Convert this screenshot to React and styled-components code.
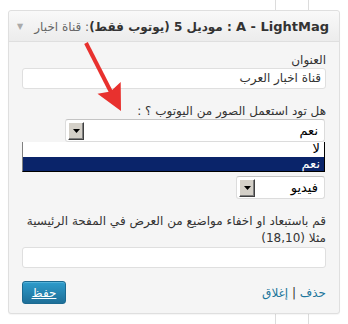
import styled, { createGlobalStyle } from "styled-components";

const GlobalStyle = createGlobalStyle`
  html, body { margin: 0; padding: 0; }
  body { background: #fff; font-family: "DejaVu Sans", sans-serif; }
  * { box-sizing: border-box; }
`;

const Page = styled.div`
  position: relative;
  width: 348px;
  height: 324px;
  padding: 10px 8px 0 8px;
  background-image: linear-gradient(
    to right,
    transparent 275px,
    #dcdcdc 275px,
    #dcdcdc 276px,
    transparent 276px,
    transparent 308px,
    #dcdcdc 308px,
    #dcdcdc 309px,
    transparent 309px
  );
`;

const Widget = styled.div`
  width: 332px;
  direction: rtl;
  background: #f5f5f5;
  border: 1px solid #dfdfdf;
  border-radius: 3px;
  box-shadow: 0 1px 1px rgba(0, 0, 0, 0.04);
`;

const Header = styled.div`
  display: flex;
  align-items: center;
  height: 31px;
  padding: 0 10px 0 8px;
  background: linear-gradient(to bottom, #f9f9f9, #ececec);
  border-bottom: 1px solid #dfdfdf;
  border-radius: 3px 3px 0 0;
`;

const Title = styled.h4`
  flex: 1;
  min-width: 0;
  margin: 0;
  font-size: 12px;
  font-weight: bold;
  color: #333;
  white-space: nowrap;
  overflow: hidden;
`;

const Latin = styled.span`
  font-size: 13px;
`;

const TitleNote = styled.span`
  font-weight: normal;
  color: #666;
`;

const Toggle = styled.span`
  flex-shrink: 0;
  margin-right: 8px;
  font-size: 8px;
  color: #aaa;
`;

const Body = styled.div`
  padding: 10px 13px 9px 13px;
`;

const Field = styled.div`
  position: relative;
  margin-top: ${(p) => p.$top || 0}px;
`;

const Label = styled.label`
  display: block;
  font-size: 12px;
  line-height: ${(p) => p.$lh || 16}px;
  color: #333;
`;

const Input = styled.div`
  height: 21px;
  padding: 0 4px;
  font-size: 12px;
  line-height: 19px;
  color: #333;
  background: #fff;
  border: 1px solid #dfdfdf;
  border-radius: 3px;
`;

const SelectBox = styled.div`
  display: flex;
  align-items: center;
  justify-content: space-between;
  width: ${(p) => p.$width}px;
  height: 23px;
  margin-right: 1px;
  padding: 0 6px 0 2px;
  background: #fff;
  border: 1px solid #dcdcdc;
  border-top-color: #c4c4c4;
  border-radius: 3px;
  font-size: 13px;
  color: #000;
`;

const DropButton = styled.span`
  display: flex;
  align-items: center;
  justify-content: center;
  width: 16px;
  height: 18px;
  background: #d4d0c8;
  border: 1px solid;
  border-color: #fff #404040 #404040 #fff;
  box-shadow: inset -1px -1px 0 #808080;
`;

const DropList = styled.ul`
  position: absolute;
  top: 100%;
  left: 0;
  right: 1px;
  margin: 0;
  padding: 0;
  list-style: none;
  background: #fff;
  border: 1px solid #000;
  border-top: none;
  border-left-color: #808080;
  z-index: 2;
`;

const Option = styled.li`
  height: 14.5px;
  padding: 0 4px;
  font-size: 13px;
  line-height: 14.5px;
  color: ${(p) => (p.$active ? "#fff" : "#000")};
  background: ${(p) => (p.$active ? "#0a246a" : "#fff")};
`;

const Footer = styled.div`
  display: flex;
  align-items: center;
  justify-content: space-between;
  margin-top: 13px;
`;

const Links = styled.div`
  font-size: 12px;
  color: #333;
`;

const Link = styled.a`
  color: #21759b;
  text-decoration: none;
`;

const SaveButton = styled.button`
  width: 44px;
  height: 23px;
  padding: 0;
  font-family: inherit;
  font-size: 12px;
  color: #fff;
  text-decoration: underline;
  background: linear-gradient(to bottom, #2e9ccc, #1e6f98);
  border: 1px solid #1b6a91;
  border-radius: 3px;
  box-shadow: inset 0 1px 0 rgba(120, 200, 230, 0.5);
`;

const Arrow = styled.svg`
  position: absolute;
  left: 0;
  top: 0;
  pointer-events: none;
`;

function Caret() {
  return (
    <svg width="7" height="4" viewBox="0 0 7 4">
      <path d="M0 0h7L3.5 4z" fill="#000" />
    </svg>
  );
}

function Select({ value, width, top, children }) {
  return (
    <Field $top={top}>
      <SelectBox $width={width}>
        <span>{value}</span>
        <DropButton>
          <Caret />
        </DropButton>
      </SelectBox>
      {children}
    </Field>
  );
}

export default function App() {
  return (
    <Page>
      <GlobalStyle />
      <Widget>
        <Header>
          <Title>
            <Latin>A - LightMag</Latin> : موديل 5 (يوتوب فقط)
            <TitleNote>: قناة اخبار العرب</TitleNote>
          </Title>
          <Toggle>▼</Toggle>
        </Header>
        <Body>
          <Field>
            <Label>العنوان</Label>
            <Input>قناة اخبار العرب</Input>
          </Field>
          <Field $top={14}>
            <Label>هل تود استعمل الصور من اليوتوب ؟ :</Label>
          </Field>
          <Select value="نعم" width={260}>
            <DropList>
              <Option>لا</Option>
              <Option $active>نعم</Option>
            </DropList>
          </Select>
          <Select value="فيديو" width={89} top={34} />
          <Field $top={14}>
            <Label $lh={17}>
              قم باستبعاد او اخفاء مواضيع من العرض في المفحة الرئيسية مثلا (18,10)
            </Label>
            <Input />
          </Field>
          <Footer>
            <Links>
              <Link href="#">حذف</Link> | <Link href="#">إغلاق</Link>
            </Links>
            <SaveButton>حفظ</SaveButton>
          </Footer>
        </Body>
      </Widget>
      <Arrow width="348" height="324" viewBox="0 0 348 324">
        <line x1="86" y1="43" x2="112" y2="94" stroke="#e8312e" strokeWidth="4" />
        <polygon points="121,111 97.5,93.8 110.5,91.5 120.7,82" fill="#e8312e" />
      </Arrow>
    </Page>
  );
}
